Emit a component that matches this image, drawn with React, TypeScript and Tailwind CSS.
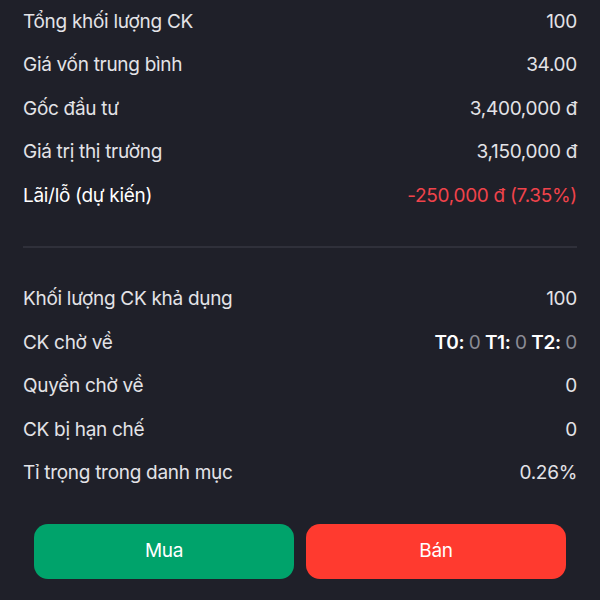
import React from 'react'

interface Row {
  label: string
  value: React.ReactNode
  strong?: boolean
}

const summary: Row[] = [
  { label: 'Tổng khối lượng CK', value: '100' },
  { label: 'Giá vốn trung bình', value: '34.00' },
  { label: 'Gốc đầu tư', value: '3,400,000 đ' },
  { label: 'Giá trị thị trường', value: '3,150,000 đ' },
  {
    label: 'Lãi/lỗ (dự kiến)',
    value: <span className="text-[#f0434b]">-250,000 đ (7.35%)</span>,
    strong: true,
  },
]

const pending = (
  <span>
    <span className="font-semibold text-white">T0: </span>
    <span className="text-[#8b8c95]">0</span>
    <span className="font-semibold text-white"> T1: </span>
    <span className="text-[#8b8c95]">0</span>
    <span className="font-semibold text-white"> T2: </span>
    <span className="text-[#8b8c95]">0</span>
  </span>
)

const details: Row[] = [
  { label: 'Khối lượng CK khả dụng', value: '100' },
  { label: 'CK chờ về', value: pending },
  { label: 'Quyền chờ về', value: '0' },
  { label: 'CK bị hạn chế', value: '0' },
  { label: 'Tỉ trọng trong danh mục', value: '0.26%' },
]

function InfoRow({ row }: { row: Row }) {
  return (
    <div className="flex h-[43.5px] items-center justify-between">
      <span className={row.strong ? 'text-white' : 'text-[#e3e3e7]'}>{row.label}</span>
      <span className="text-[#e3e3e7]">{row.value}</span>
    </div>
  )
}

export default function App() {
  return (
    <div
      className="h-[600px] w-[600px] overflow-hidden bg-[#1f2029] text-[19px] tracking-[-0.3px]"
      style={{ fontFamily: 'Inter, "Noto Sans", sans-serif' }}
    >
      <div className="px-[23px]">
        {summary.map((row) => (
          <InfoRow key={row.label} row={row} />
        ))}
        <div className="mt-[28px] mb-[30px] h-[2px] bg-[#2f303a]" />
        {details.map((row) => (
          <InfoRow key={row.label} row={row} />
        ))}
      </div>
      <div className="mt-[29px] flex gap-[12px] px-[34px]">
        <button className="h-[55px] flex-1 rounded-[14px] bg-[#00a36b] text-[19px] text-white">
          Mua
        </button>
        <button className="h-[55px] flex-1 rounded-[14px] bg-[#ff3a2f] text-[19px] text-white">
          Bán
        </button>
      </div>
    </div>
  )
}
